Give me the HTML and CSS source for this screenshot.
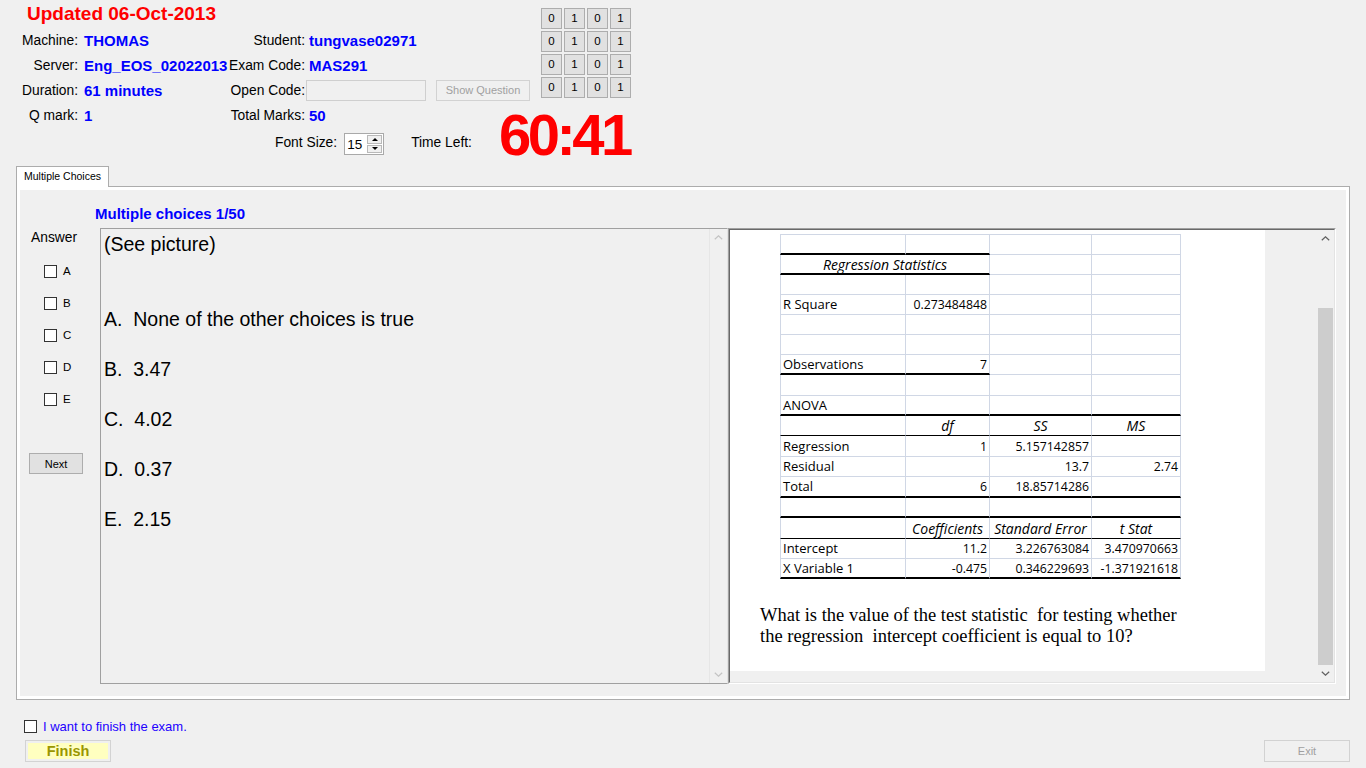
FILE: index.html
```html
<!DOCTYPE html>
<html>
<head>
<meta charset="utf-8">
<title>Exam</title>
<link rel="stylesheet" href="styles.css">
</head>
<body>
<div class="top">
  <div class="info">
    <div class="title">Updated 06-Oct-2013</div>
    <div class="grid">
      <div class="lbl">Machine:</div><div class="val">THOMAS</div><div class="lbl">Student:</div><div class="val2">tungvase02971</div>
      <div class="lbl">Server:</div><div class="val">Eng_EOS_02022013</div><div class="lbl">Exam Code:</div><div class="val2">MAS291</div>
      <div class="lbl">Duration:</div><div class="val">61 minutes</div><div class="lbl">Open Code:</div><div class="opencell"><div class="textbox"></div><button class="btn dis showq">Show Question</button></div>
      <div class="lbl">Q mark:</div><div class="val">1</div><div class="lbl">Total Marks:</div><div class="val2">50</div>
    </div>
    <div class="fontrow">
      <span class="flabel">Font Size:</span>
      <div class="spin"><span class="spinval">15</span><div class="spinbtns"><span class="sb up"></span><span class="sb down"></span></div></div>
      <span class="flabel tl">Time Left:</span>
      <span class="timer">60:41</span>
    </div>
  </div>
  <div class="bits">
    <button class="bit">0</button><button class="bit">1</button><button class="bit">0</button><button class="bit">1</button>
    <button class="bit">0</button><button class="bit">1</button><button class="bit">0</button><button class="bit">1</button>
    <button class="bit">0</button><button class="bit">1</button><button class="bit">0</button><button class="bit">1</button>
    <button class="bit">0</button><button class="bit">1</button><button class="bit">0</button><button class="bit">1</button>
  </div>
</div>

<div class="tabctl">
  <div class="tabs"><div class="tab">Multiple Choices</div></div>
  <div class="tabpanel">
    <div class="page">
      <div class="qtitle">Multiple choices 1/50</div>
      <div class="answers">
        <div class="anslbl">Answer</div>
        <ul class="opts">
          <li><span class="cb"></span>A</li>
          <li><span class="cb"></span>B</li>
          <li><span class="cb"></span>C</li>
          <li><span class="cb"></span>D</li>
          <li><span class="cb"></span>E</li>
        </ul>
        <button class="btn next">Next</button>
      </div>
      <div class="qpanel">
        <div class="qtext">
          <div class="ln">(See picture)</div>
          <div class="ln"> </div>
          <div class="ln"> </div>
          <div class="ln">A.  None of the other choices is true</div>
          <div class="ln"> </div>
          <div class="ln">B.  3.47</div>
          <div class="ln"> </div>
          <div class="ln">C.  4.02</div>
          <div class="ln"> </div>
          <div class="ln">D.  0.37</div>
          <div class="ln"> </div>
          <div class="ln">E.  2.15</div>
        </div>
        <div class="vscroll off">
          <div class="sbtn"><svg width="9" height="5" viewBox="0 0 9 5"><path d="M0.8 4.3 L4.5 0.8 L8.2 4.3" fill="none" stroke="#c4c4c4" stroke-width="1.2"/></svg></div>
          <div class="track"></div>
          <div class="sbtn"><svg width="9" height="5" viewBox="0 0 9 5"><path d="M0.8 0.7 L4.5 4.2 L8.2 0.7" fill="none" stroke="#c4c4c4" stroke-width="1.2"/></svg></div>
        </div>
      </div>
      <div class="pic">
        <div class="picinner">
          <div class="picview">
            <div class="image">
              <table class="xl">
                <colgroup><col class="c1"><col class="c2"><col class="c3"><col class="c4"></colgroup>
                <tr class="h21"><td class="k"></td><td class="k"></td><td></td><td></td></tr>
                <tr><td colspan="2" class="k hd">Regression Statistics</td><td></td><td></td></tr>
                <tr><td></td><td></td><td></td><td></td></tr>
                <tr><td>R Square</td><td class="n">0.273484848</td><td></td><td></td></tr>
                <tr><td></td><td></td><td></td><td></td></tr>
                <tr><td></td><td></td><td></td><td></td></tr>
                <tr><td class="k">Observations</td><td class="n k">7</td><td></td><td></td></tr>
                <tr class="h21"><td></td><td></td><td></td><td></td></tr>
                <tr><td class="k">ANOVA</td><td class="k"></td><td class="k"></td><td class="k"></td></tr>
                <tr><td class="t"></td><td class="t hd">df</td><td class="t hd">SS</td><td class="t hd">MS</td></tr>
                <tr class="h21"><td>Regression</td><td class="n">1</td><td class="n">5.157142857</td><td></td></tr>
                <tr><td>Residual</td><td></td><td class="n">13.7</td><td class="n">2.74</td></tr>
                <tr class="h21"><td class="k">Total</td><td class="n k">6</td><td class="n k">18.85714286</td><td class="k"></td></tr>
                <tr><td class="k"></td><td class="k"></td><td class="k"></td><td class="k"></td></tr>
                <tr class="h21"><td class="t"></td><td class="t hd">Coefficients</td><td class="t hd">Standard Error</td><td class="t hd">t Stat</td></tr>
                <tr><td>Intercept</td><td class="n">11.2</td><td class="n">3.226763084</td><td class="n">3.470970663</td></tr>
                <tr><td class="k">X Variable 1</td><td class="n k">-0.475</td><td class="n k">0.346229693</td><td class="n k">-1.371921618</td></tr>
              </table>
              <div class="itext">What is the value of the test statistic  for testing whether
the regression  intercept coefficient is equal to 10?</div>
            </div>
          </div>
          <div class="vscroll">
            <div class="sbtn"><svg width="9" height="5" viewBox="0 0 9 5"><path d="M0.8 4.3 L4.5 0.8 L8.2 4.3" fill="none" stroke="#606060" stroke-width="1.2"/></svg></div>
            <div class="track"><div class="thumb"></div></div>
            <div class="sbtn"><svg width="9" height="5" viewBox="0 0 9 5"><path d="M0.8 0.7 L4.5 4.2 L8.2 0.7" fill="none" stroke="#606060" stroke-width="1.2"/></svg></div>
          </div>
        </div>
      </div>
    </div>
  </div>
</div>

<div class="bottom">
  <div class="finishchk"><span class="cb"></span>I want to finish the exam.</div>
  <div class="btnrow">
    <button class="finish">Finish</button>
    <button class="btn dis exit">Exit</button>
  </div>
</div>
</body>
</html>
```

FILE: styles.css
```css
html, body {
  margin: 0;
  padding: 0;
}
body {
  width: 1366px;
  height: 768px;
  overflow: hidden;
  background: #f0f0f0;
  font-family: "Liberation Sans", Arial, sans-serif;
  font-size: 13.8px;
  color: #000;
}
button {
  font-family: "Liberation Sans", Arial, sans-serif;
  padding: 0;
  margin: 0;
}

/* ---------- header ---------- */
.top {
  display: flex;
  height: 158px;
}
.info {
  width: 541px;
  flex-shrink: 0;
}
.title {
  height: 28px;
  line-height: 28px;
  padding-left: 27px;
  color: #ff0000;
  font-weight: bold;
  font-size: 19px;
}
.grid {
  display: grid;
  grid-template-columns: 78px 151px 76px 236px;
  grid-auto-rows: 25px;
  align-items: center;
}
.lbl {
  display: flex;
  justify-content: flex-end;
  white-space: nowrap;
}
.val, .val2 {
  white-space: nowrap;
  overflow: hidden;
  color: #0000ff;
  font-weight: bold;
  font-size: 15px;
}
.val { padding-left: 6px; }
.val2 { padding-left: 4px; }
.opencell {
  display: flex;
  align-items: center;
  padding-left: 1px;
}
.textbox {
  width: 120px;
  height: 21px;
  box-sizing: border-box;
  border: 1px solid #cfcfcf;
  background: #f0f0f0;
}
.btn {
  font-size: 10.5px;
  border: 1px solid #adadad;
  background: #e1e1e1;
  color: #000;
  box-sizing: border-box;
}
.btn.dis {
  border-color: #d2d2d2;
  background: #f0f0f0;
  color: #a0a0a0;
}
.showq {
  margin-left: 10px;
  width: 94px;
  height: 21px;
  font-size: 11px;
  line-height: 17px;
}

.fontrow {
  display: flex;
  align-items: flex-start;
  margin-top: -16px;
  height: 46px;
  padding-left: 275px;
  white-space: nowrap;
}
.flabel {
  margin-top: 23px;
  line-height: 16px;
  flex-shrink: 0;
}
.spin {
  flex-shrink: 0;
  margin: 21px 0 0 7px;
  width: 40px;
  height: 22px;
  box-sizing: border-box;
  border: 1px solid #a9a9a9;
  background: #fff;
  display: flex;
}
.spinval {
  padding-left: 2px;
  line-height: 21px;
  font-size: 13.5px;
}
.spinbtns {
  margin-left: auto;
  width: 15px;
  display: flex;
  flex-direction: column;
  padding: 1px 1px 1px 0;
  gap: 1px;
}
.sb {
  flex: 1;
  border: 1px solid #b9b9b9;
  background: #f0f0f0;
  display: flex;
  align-items: center;
  justify-content: center;
}
.sb::after {
  content: "";
  width: 0;
  height: 0;
  border-left: 3px solid transparent;
  border-right: 3px solid transparent;
}
.sb.up::after { border-bottom: 3px solid #000; }
.sb.down::after { border-top: 3px solid #000; }
.tl { margin-left: 27px; }
.timer {
  flex-shrink: 0;
  margin-left: 27px;
  font-size: 58px;
  line-height: 46px;
  font-weight: bold;
  color: #ff0000;
  letter-spacing: -3.5px;
}

.bits {
  display: grid;
  grid-template-columns: repeat(4, 21px);
  grid-auto-rows: 21px;
  gap: 2px;
  margin-top: 8px;
  align-self: flex-start;
}
.bit {
  border: 1px solid #adadad;
  background: #e1e1e1;
  font-size: 11.5px;
  color: #000;
  width: 21px;
  height: 21px;
  box-sizing: border-box;
  line-height: 19px;
}

/* ---------- tab control ---------- */
.tabctl {
  margin: 8px 0 0 16px;
  width: 1334px;
}
.tabs {
  display: flex;
  height: 20px;
}
.tab {
  height: 21px;
  box-sizing: border-box;
  border: 1px solid #acacac;
  border-bottom: none;
  background: #fff;
  padding: 0 7px;
  font-size: 10.5px;
  line-height: 19px;
  position: relative;
  z-index: 1;
}
.tabpanel {
  height: 514px;
  box-sizing: border-box;
  border: 1px solid #acacac;
  background: #fff;
  padding: 3px;
}
.page {
  height: 100%;
  background: #f0f0f0;
  display: grid;
  grid-template-columns: 80px 628px 608px;
  grid-template-rows: 38px 456px;
}
.qtitle {
  grid-column: 1 / -1;
  padding: 16px 0 0 75px;
  line-height: 16px;
  font-weight: bold;
  font-size: 15px;
  color: #0000ff;
}

.answers {
  display: flex;
  flex-direction: column;
  align-items: flex-start;
}
.anslbl {
  margin: 2px 0 0 11px;
  line-height: 16px;
}
.opts {
  list-style: none;
  margin: 9px 0 0;
  padding: 0;
}
.opts li {
  height: 32px;
  display: flex;
  align-items: center;
  padding-left: 24px;
  font-size: 11.5px;
}
.cb {
  width: 13px;
  height: 13px;
  box-sizing: border-box;
  border: 1px solid #333;
  background: #fff;
  margin-right: 6px;
  flex-shrink: 0;
}
.next {
  margin: 38px 0 0 9px;
  width: 54px;
  height: 21px;
  font-size: 11px;
}

.qpanel {
  display: flex;
  box-sizing: border-box;
  border: 1px solid #a0a0a0;
  border-right-color: #e3e3e3;
  background: #f0f0f0;
  overflow: hidden;
}
.qtext {
  flex: 1;
  padding: 3px 0 0 3px;
  font-size: 19.5px;
  line-height: 25px;
}
.ln {
  height: 25px;
  white-space: pre;
}
.vscroll {
  width: 17px;
  flex-shrink: 0;
  display: flex;
  flex-direction: column;
  background: #f0f0f0;
}
.vscroll.off {
  width: 17px;
  border-left: 1px solid #e6e6e6;
}
.sbtn {
  height: 17px;
  display: flex;
  align-items: center;
  justify-content: center;
}
.track {
  flex: 1;
  padding-top: 61px;
}
.thumb {
  height: 357px;
  margin: 0 1px;
  background: #cdcdcd;
}

.pic {
  box-sizing: border-box;
  border: 1px solid;
  border-color: #a0a0a0 #ffffff #ffffff #a0a0a0;
}
.picinner {
  height: 100%;
  box-sizing: border-box;
  border: 1px solid;
  border-color: #696969 #e3e3e3 #e3e3e3 #696969;
  display: flex;
}
.picview {
  flex: 1;
  overflow: hidden;
  background: #f0f0f0;
}
.image {
  width: 535px;
  height: 441px;
  background: #fff;
  padding-top: 4px;
  box-sizing: border-box;
}

/* excel table picture */
.xl {
  border-collapse: separate;
  border-spacing: 0;
  table-layout: fixed;
  width: 401px;
  margin-left: 50px;
  font-family: "Open Sans", "Liberation Sans", sans-serif;
  font-size: 13px;
  color: #000;
}
.xl col.c1 { width: 126px; }
.xl col.c2 { width: 84px; }
.xl col.c3 { width: 102px; }
.xl col.c4 { width: 89px; }
.xl tr { height: 20px; }
.xl tr.h21 { height: 21px; }
.xl td {
  padding: 0 2px;
  border-right: 1px solid #d0d7e5;
  border-bottom: 1px solid #d0d7e5;
  line-height: 15px;
  white-space: nowrap;
  overflow: hidden;
  vertical-align: middle;
}
.xl tr:first-child td { border-top: 1px solid #d0d7e5; }
.xl td:first-child { border-left: 1px solid #d0d7e5; }
.xl td.k { border-bottom: 2px solid #000; }
.xl td.t { border-bottom: 1px solid #000; }
.xl td.n { text-align: right; font-size: 12.3px; }
.xl td.hd { text-align: center; font-style: italic; font-size: 14px; }

.itext {
  margin: 26px 0 0 30px;
  font-family: "Liberation Serif", "Times New Roman", serif;
  font-size: 18.5px;
  line-height: 21px;
  white-space: pre;
}

/* ---------- bottom ---------- */
.bottom {
  padding: 18px 16px 0 24px;
}
.finishchk {
  display: flex;
  align-items: center;
  height: 17px;
  color: #2200ff;
  font-size: 13px;
}
.btnrow {
  display: flex;
  justify-content: space-between;
  margin-top: 5px;
  padding-left: 1px;
}
.finish {
  width: 86px;
  height: 22px;
  box-sizing: border-box;
  border: 1px solid #d3d3d3;
  background: #ffffc0;
  box-shadow: inset 0 0 0 2px #f0f0f0;
  color: #9a9600;
  font-weight: bold;
  font-size: 14.5px;
}
.exit {
  width: 86px;
  height: 22px;
  font-size: 11px;
}
```
